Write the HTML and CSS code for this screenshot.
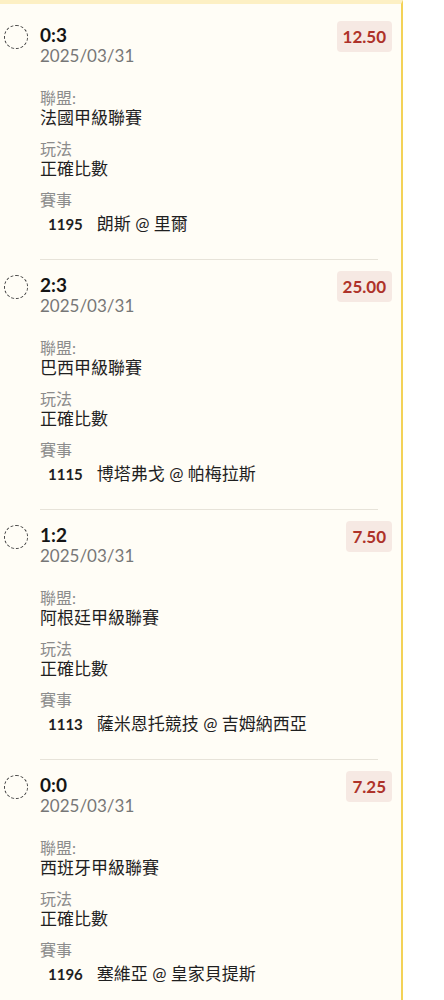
FILE: index.html
```html
<!DOCTYPE html>
<html lang="zh-Hant">
<head>
    <meta charset="UTF-8">
    <meta name="viewport" content="width=device-width, initial-scale=1.0">
    <title>投注紀錄</title>
    <link rel="stylesheet" href="styles.css">
</head>
<body>
    <div class="panel">
        <div class="bet-list">
            <div class="bet">
                <span class="bet-check"></span>
                <div class="bet-body">
                    <div class="bet-score">0:3</div>
                    <div class="bet-date">2025/03/31</div>
                    <div class="fields">
                        <div class="field">
                            <div class="field-label">聯盟:</div>
                            <div class="field-value">法國甲級聯賽</div>
                        </div>
                        <div class="field">
                            <div class="field-label">玩法</div>
                            <div class="field-value">正確比數</div>
                        </div>
                        <div class="field">
                            <div class="field-label">賽事</div>
                            <div class="match"><span class="match-no">1195</span>朗斯 @ 里爾</div>
                        </div>
                    </div>
                </div>
                <span class="odds">12.50</span>
            </div>
            <hr class="divider">

            <div class="bet">
                <span class="bet-check"></span>
                <div class="bet-body">
                    <div class="bet-score">2:3</div>
                    <div class="bet-date">2025/03/31</div>
                    <div class="fields">
                        <div class="field">
                            <div class="field-label">聯盟:</div>
                            <div class="field-value">巴西甲級聯賽</div>
                        </div>
                        <div class="field">
                            <div class="field-label">玩法</div>
                            <div class="field-value">正確比數</div>
                        </div>
                        <div class="field">
                            <div class="field-label">賽事</div>
                            <div class="match"><span class="match-no">1115</span>博塔弗戈 @ 帕梅拉斯</div>
                        </div>
                    </div>
                </div>
                <span class="odds">25.00</span>
            </div>
            <hr class="divider">

            <div class="bet">
                <span class="bet-check"></span>
                <div class="bet-body">
                    <div class="bet-score">1:2</div>
                    <div class="bet-date">2025/03/31</div>
                    <div class="fields">
                        <div class="field">
                            <div class="field-label">聯盟:</div>
                            <div class="field-value">阿根廷甲級聯賽</div>
                        </div>
                        <div class="field">
                            <div class="field-label">玩法</div>
                            <div class="field-value">正確比數</div>
                        </div>
                        <div class="field">
                            <div class="field-label">賽事</div>
                            <div class="match"><span class="match-no">1113</span>薩米恩托競技 @ 吉姆納西亞</div>
                        </div>
                    </div>
                </div>
                <span class="odds">7.50</span>
            </div>
            <hr class="divider">

            <div class="bet">
                <span class="bet-check"></span>
                <div class="bet-body">
                    <div class="bet-score">0:0</div>
                    <div class="bet-date">2025/03/31</div>
                    <div class="fields">
                        <div class="field">
                            <div class="field-label">聯盟:</div>
                            <div class="field-value">西班牙甲級聯賽</div>
                        </div>
                        <div class="field">
                            <div class="field-label">玩法</div>
                            <div class="field-value">正確比數</div>
                        </div>
                        <div class="field">
                            <div class="field-label">賽事</div>
                            <div class="match"><span class="match-no">1196</span>塞維亞 @ 皇家貝提斯</div>
                        </div>
                    </div>
                </div>
                <span class="odds">7.25</span>
            </div>
        </div>
    </div>
</body>
</html>
```

FILE: styles.css
```css
body {
    margin: 0;
    padding: 0;
    background-color: #ffffff;
    font-family: Lato, "Noto Sans CJK TC", sans-serif;
    color: #1c1c1c;
}
.panel {
    width: 403px;
    min-height: 1000px;
    background-color: #fffdf6;
    border-top: 4px solid #fdf0c4;
    border-right: 2px solid #f3d257;
    box-sizing: border-box;
}
.bet-list {
    padding-top: 6px;
}
.bet {
    display: flex;
    align-items: flex-start;
    padding: 14px 9px 24px 4px;
}
.bet-check {
    flex: none;
    width: 22px;
    height: 22px;
    margin-top: 1px;
    margin-right: 12px;
    border: 1px dashed #444;
    border-radius: 50%;
}
.bet-body {
    flex: 1;
}
.bet-score {
    font-size: 19px;
    font-weight: 700;
    line-height: 22px;
    color: #151515;
}
.bet-date {
    font-size: 17px;
    line-height: 20px;
    color: #777;
}
.fields {
    margin-top: 22px;
}
.field {
    margin-bottom: 11px;
}
.field:last-child {
    margin-bottom: 0;
}
.field-label {
    font-size: 16px;
    line-height: 20px;
    color: #8c8c8c;
}
.field-value {
    font-size: 17px;
    line-height: 20px;
    color: #1f1f1f;
}
.match {
    margin-top: 3px;
    padding-left: 8px;
    font-size: 17px;
    line-height: 22px;
    color: #1f1f1f;
}
.match-no {
    font-size: 15px;
    font-weight: 700;
    margin-right: 14px;
}
.odds {
    flex: none;
    margin-top: -3px;
    padding: 5px 6px;
    font-size: 17px;
    font-weight: 700;
    line-height: 21px;
    color: #ae3229;
    background-color: #f6e9e3;
    border-radius: 4px;
}
.divider {
    margin: 0 23px 0 40px;
    border: none;
    border-top: 1px solid #e7e3d9;
}
```
